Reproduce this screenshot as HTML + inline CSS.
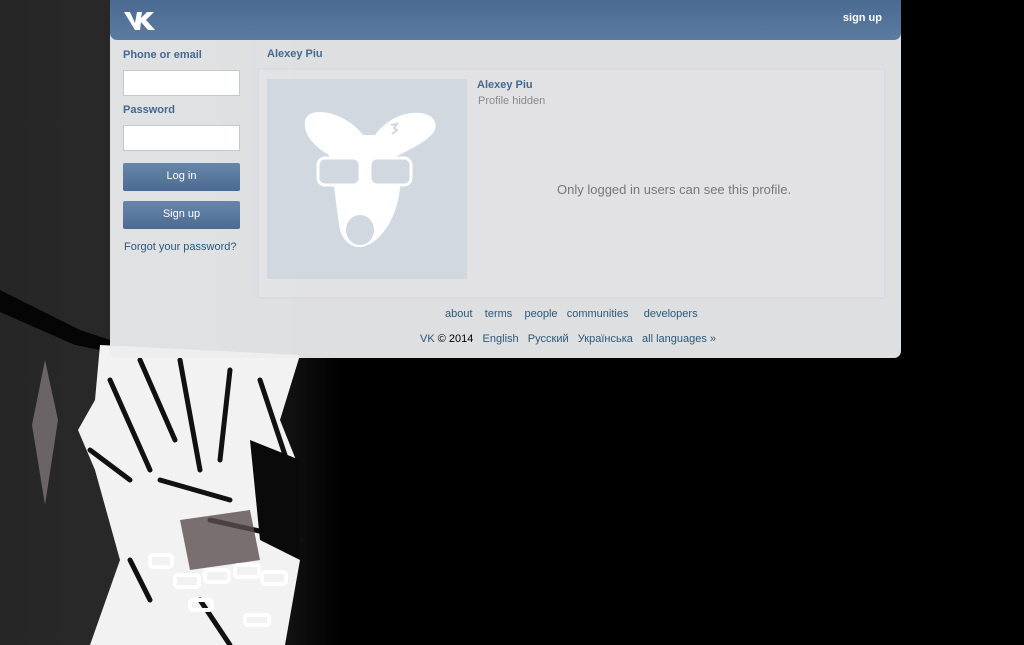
<!DOCTYPE html>
<html><head><meta charset="utf-8"><style>
*{margin:0;padding:0;box-sizing:border-box}
body{width:1024px;height:645px;overflow:hidden;background:#000;font-family:"Liberation Sans",sans-serif;font-size:11px;position:relative}
.bg{position:absolute;left:0;top:0;width:340px;height:645px;background:linear-gradient(90deg,#262626 0,#2a2a2a 50%,#111 85%,#000 100%)}
.panel{position:absolute;left:110px;top:0;width:791px;height:358px;background:rgba(236,237,238,0.94);border-radius:0 0 7px 7px;overflow:hidden}
.hdr{height:40px;background:linear-gradient(#4a6a92,#5b7ba0);border-radius:0 0 7px 7px;position:relative}
.hdr .su{position:absolute;right:19px;top:12px;color:#fff;font-weight:bold;font-size:11px}
.lab{position:absolute;left:13px;color:#45688e;font-weight:bold;font-size:11px}
.inp{position:absolute;left:13px;width:117px;height:26px;background:#fff;border:1px solid #c0cad5}
.btn{position:absolute;left:13px;width:117px;height:28px;background:linear-gradient(#6886aa,#4b6b92);border-radius:2px;color:#fff;text-align:center;line-height:27px;font-size:11px}
.sep{position:absolute;left:145px;top:40px;width:1px;height:260px;background:#dcdfe2}
.box{position:absolute;left:147px;top:68px;width:629px;height:231px;border:2px solid #dadcdf;background:rgba(228,229,230,0.6)}
.l{color:#2b587a}
</style></head><body>
<div class="bg"></div>
<svg style="position:absolute;left:0;top:0" width="340" height="645">
<path d="M0 290 L80 330 L110 340 L110 352 L75 345 L0 312Z" fill="#050505"/>
<path d="M45 360 L58 420 L45 505 L32 425Z" fill="#6a6466"/>
<path d="M100 345 L300 355 L280 420 L300 470 L300 560 L285 645 L90 645 L120 560 L95 470 L78 430 L95 400Z" fill="#f2f2f2"/>
<g stroke="#111" stroke-width="5" fill="none" stroke-linecap="round">
<path d="M110 380 L150 470"/><path d="M140 360 L175 440"/><path d="M180 360 L200 470"/><path d="M230 370 L220 460"/><path d="M260 380 L290 470"/><path d="M90 450 L130 480"/><path d="M160 480 L230 500"/><path d="M210 520 L300 540"/><path d="M130 560 L150 600"/><path d="M200 600 L230 645"/>
</g>
<path d="M250 440 L300 460 L300 560 L260 540Z" fill="#0a0a0a"/>
<path d="M180 520 L250 510 L260 560 L190 570Z" fill="#5a4e50" opacity=".8"/>
<g fill="none" stroke="#fff" stroke-width="4"><rect x="150" y="555" width="22" height="12" rx="3"/><rect x="175" y="575" width="24" height="12" rx="3"/><rect x="205" y="570" width="24" height="12" rx="3"/><rect x="235" y="565" width="24" height="12" rx="3"/><rect x="262" y="572" width="24" height="12" rx="3"/><rect x="190" y="600" width="22" height="10" rx="3"/><rect x="245" y="615" width="24" height="10" rx="3"/></g>
</svg>
<div class="panel">
<div class="hdr">
<svg style="position:absolute;left:14px;top:10px" width="34" height="20" viewBox="0 0 34 20"><path d="M0 2h6l5 11 2-11h5l-1 6 6-6h7l-8 8 9 10h-7l-7-8-1 8h-5z" fill="#fff"/></svg>
<div class="su">sign up</div></div>
<div class="lab" style="top:49px">Phone or email</div>
<div class="inp" style="top:70px"></div>
<div class="lab" style="top:104px">Password</div>
<div class="inp" style="top:125px"></div>
<div class="btn" style="top:163px">Log in</div>
<div class="btn" style="top:201px">Sign up</div>
<div class="l" style="position:absolute;left:14px;top:241px">Forgot your password?</div>
<div class="sep"></div>
<div style="position:absolute;left:157px;top:48px;color:#45688e;font-weight:bold">Alexey Piu</div>
<div class="box"></div>
<div style="position:absolute;left:157px;top:79px;width:200px;height:200px;background:#d2d8df">
<svg width="200" height="200" viewBox="0 0 200 200">
<path d="M62 76 C48 68 36 56 38 42 C40 32 52 32 62 34 C78 38 90 48 96 56 L108 56 C118 42 136 32 154 34 C168 36 172 46 166 54 C158 64 140 72 128 78 L128 100 L134 100 C132 128 124 146 112 158 C104 166 96 169 90 168 C80 166 74 158 72 146 L66 100 L62 100Z" fill="#fff"/>
<rect x="51" y="79" width="42" height="27" rx="7" fill="#d2d8df" stroke="#fff" stroke-width="3"/>
<rect x="103" y="79" width="41" height="27" rx="7" fill="#d2d8df" stroke="#fff" stroke-width="3"/>
<rect x="92" y="86" width="12" height="4" fill="#fff"/>
<ellipse cx="93" cy="151" rx="14" ry="15" fill="#d2d8df"/>
<path d="M124 46 l6 -1 -3 4 3 2 -5 4" stroke="#d2d8df" stroke-width="2" fill="none"/>
</svg></div>
<div style="position:absolute;left:367px;top:79px;color:#45688e;font-weight:bold">Alexey Piu</div>
<div style="position:absolute;left:368px;top:95px;color:#888">Profile hidden</div>
<div style="position:absolute;left:447px;top:182px;color:#777;font-size:13px">Only logged in users can see this profile.</div>
<div style="position:absolute;left:335px;top:308px"><span class="l">about</span>&nbsp;&nbsp;&nbsp;&nbsp;<span class="l">terms</span>&nbsp;&nbsp;&nbsp;&nbsp;<span class="l">people</span>&nbsp;&nbsp;&nbsp;<span class="l">communities</span>&nbsp;&nbsp;&nbsp;&nbsp;&nbsp;<span class="l">developers</span></div>
<div style="position:absolute;left:310px;top:333px"><span class="l">VK</span> © 2014 &nbsp;&nbsp;<span class="l">English</span>&nbsp;&nbsp;&nbsp;<span class="l">Русский</span>&nbsp;&nbsp;&nbsp;<span class="l">Українська</span>&nbsp;&nbsp;&nbsp;<span class="l">all languages »</span></div>
</div>
</body></html>
